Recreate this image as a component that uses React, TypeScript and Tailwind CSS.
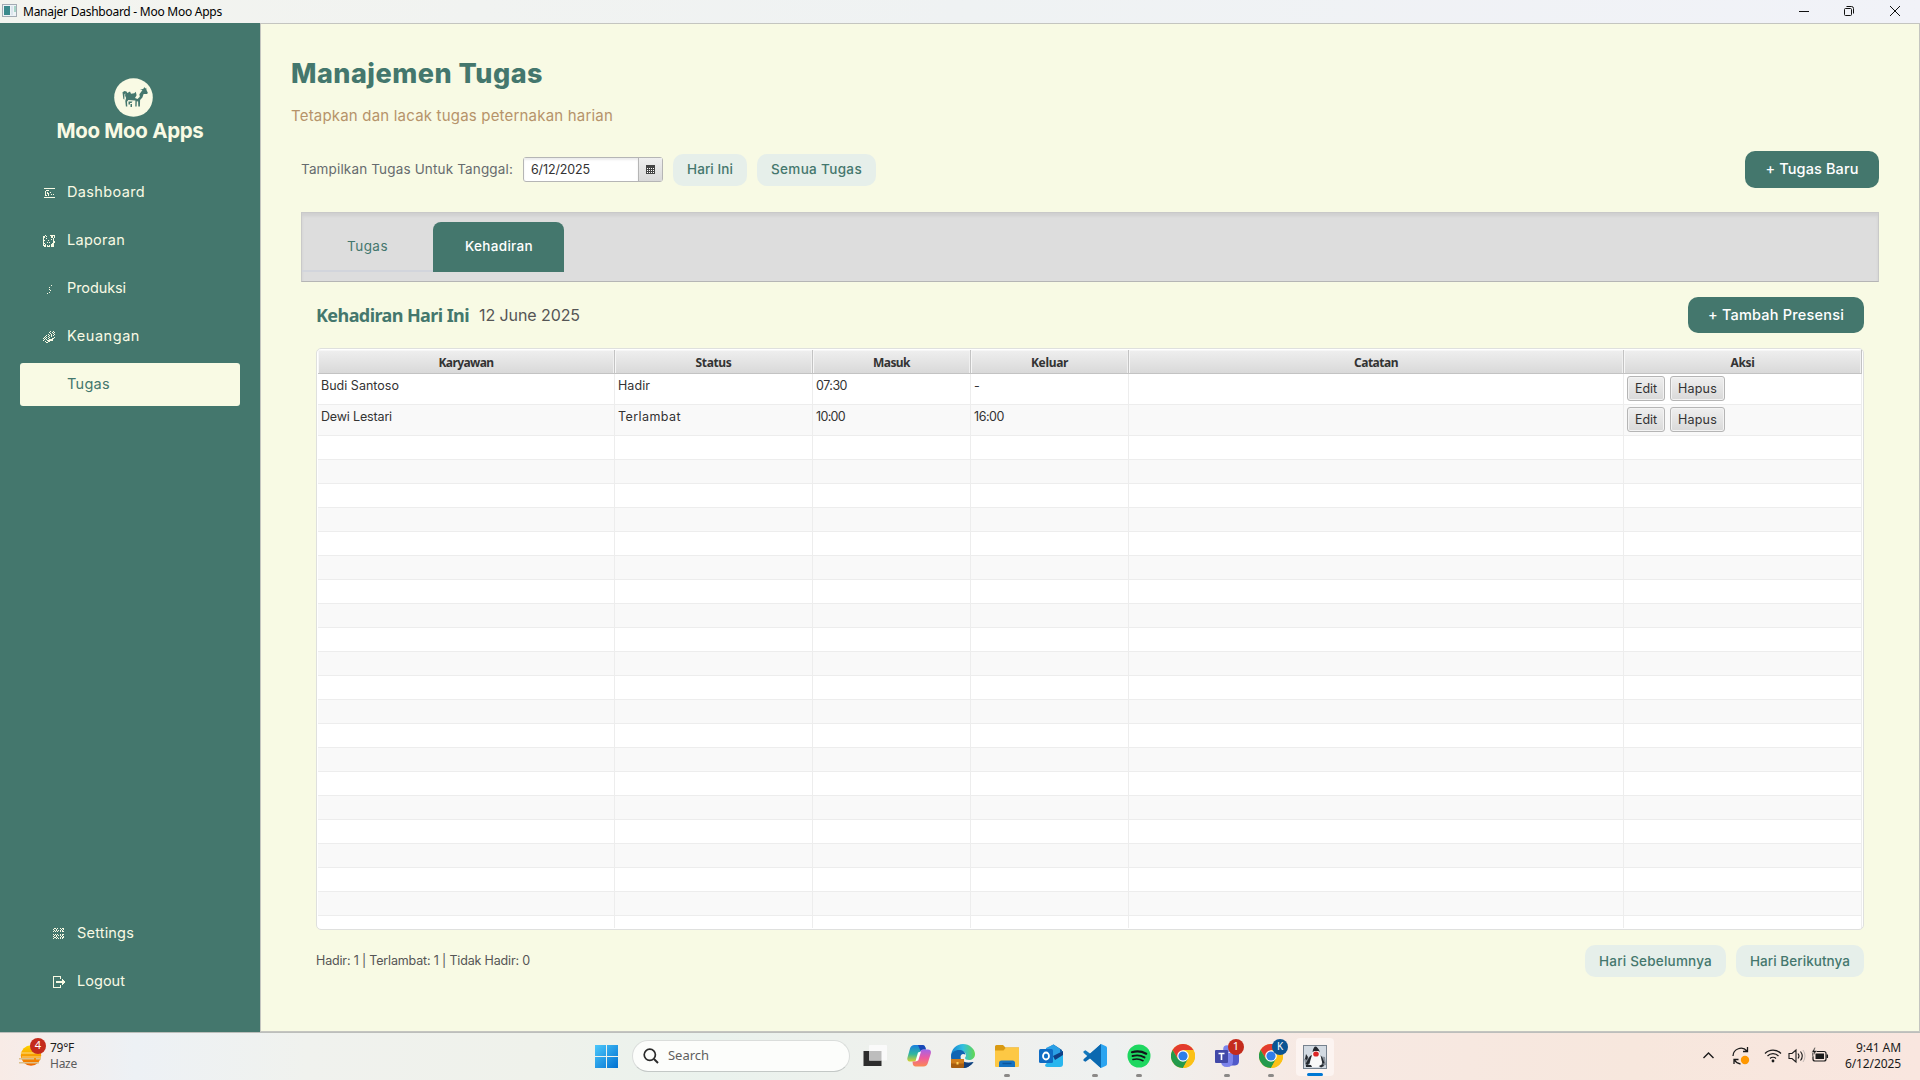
import { useLayoutEffect, useRef, useState } from "react";
import type { ReactNode } from "react";

/* One line of text whose tracking is adjusted so that it spans `w` pixels. */
function Fit({ w, children, className = "" }: { w: number; children: string; className?: string }) {
  const ref = useRef<HTMLSpanElement>(null);
  const [spacing, setSpacing] = useState(0);
  useLayoutEffect(() => {
    const el = ref.current;
    if (!el) return;
    el.style.letterSpacing = "0px";
    const natural = el.getBoundingClientRect().width;
    const next = (w - natural) / children.length;
    el.style.letterSpacing = `${next}px`;
    setSpacing(next);
  }, [w, children]);
  return (
    <span ref={ref} className={`inline-block shrink-0 whitespace-nowrap ${className}`} style={{ letterSpacing: spacing }}>
      {children}
    </span>
  );
}

function Pixels({ rows, className = "" }: { rows: string[]; className?: string }) {
  const width = Math.max(...rows.map((r) => r.length));
  return (
    <svg width={width} height={rows.length} className={className} shapeRendering="crispEdges" fill="#f9fae4">
      {rows.flatMap((r, y) =>
        r.split("").map((c, x) => (c === "#" ? <rect key={`${x}-${y}`} x={x} y={y} width="1" height="1" /> : null)),
      )}
    </svg>
  );
}

const dashboardIcon = [
  "###########",
  "...........",
  "..###......",
  ".#.........",
  ".#.#..#....",
  ".#.##......",
  ".#..#..#.#.",
  ".##.#......",
  "...........",
  "###########",
];
const laporanIcon = [
  "..#....#####",
  "##.#....##.#",
  "##......##.#",
  "#..#......#.",
  "#.......#.#.",
  "##...#....#.",
  "#.........##",
  "#...#.#...##",
  "##.......##.",
  "#.#.....###.",
  "###.#.#.###.",
  ".##.###.###.",
];
const produksiIcon = [
  "......",
  ".....#",
  "......",
  "...#..",
  "......",
  "...#..",
  "....#.",
  "......",
  "...#..",
  ".#....",
];
const keuanganIcon = [
  ".......#..#.",
  "......#..#.#",
  ".......#..#.",
  ".....#..#..#",
  "...#..#.#.#.",
  "..#..#..#...",
  ".#.#..#....#",
  "#.#..#...##.",
  ".#.#..####..",
  "#...######..",
  "..#..##.....",
  "...##.......",
];
const settingsIcon = [
  ".##.#..#.##",
  "#..#....#.#",
  ".#.#.#.#.#.",
  "#.#.#..#.##",
  "...........",
  "...........",
  "#.#.#..#.##",
  ".#.#.#.#.#.",
  "#..#....#.#",
  ".##.#..#.##",
  "#..#.#.#.#.",
];
const logoutIcon = [
  "########....",
  "#......#....",
  "#......#....",
  "#........#..",
  "#........##.",
  "#..#########",
  "#..#########",
  "#........##.",
  "#........#..",
  "#......#....",
  "#......#....",
  "########....",
];

const nav = [
  { label: "Dashboard", w: 78, icon: dashboardIcon },
  { label: "Laporan", w: 58, icon: laporanIcon },
  { label: "Produksi", w: 59, icon: produksiIcon },
  { label: "Keuangan", w: 73, icon: keuanganIcon },
];

function Cow() {
  return (
    <svg width="39" height="39" viewBox="0 0 39 39">
      <circle cx="19.5" cy="19.5" r="19.3" fill="#f9fae4" />
      <g fill="#44776d">
        <path d="M8.5 14.200 10.500 13l2 .4.800 1.600 2.700-1.500 1 2.200 3.300-.5 1.500-1.500.8 3.500-1.600 2.800 2.500 1 2.300-2.300-.4-2.500 2-2.700 1-1.400-2.400-.8 3.200-.4 1.200-2 .8 1.600 1-.8.300 2.300 1.400 3-1 1.100-3.300-.2-1.200 3.500-2.300 2.500-.2 6.700h-1.600l-.2-5-1.300-.3-.2 5.300h-1.300l.1-6-4.200-.4-2.900-.2-1.300 1.700.3 4.900h-1.400l-.6-5.600.8-3-1-2.200.2-2.600-.8 1-.2 5.500-1-1z" />
        <path d="M14.500 23.500h4l-1 1.500h-1.500v1.500h-1.500zM16.500 26h1.500v3h-1.500z" />
      </g>
    </svg>
  );
}

function Sidebar() {
  return (
    <aside className="flex w-[260px] shrink-0 flex-col bg-[#44776d] font-['Inter'] text-[#f9fae4]">
      <div className="mt-[55px] flex flex-col items-center">
        <div className="h-[39px] pl-[7px]">
          <Cow />
        </div>
        <Fit w={147} className="mt-px text-[20.5px] leading-[26px] font-bold">Moo Moo Apps</Fit>
      </div>
      <nav className="mt-[27px] flex flex-col gap-[5px] px-5">
        {nav.map((n) => (
          <div key={n.label} className="flex h-[43px] items-center pl-[23px] text-[14.5px]">
            <div className="flex w-6 items-center">
              <Pixels rows={n.icon} className={n.label === "Produksi" ? "ml-[3px]" : n.label === "Dashboard" ? "ml-px" : ""} />
            </div>
            <Fit w={n.w} className="-mt-[2px]">{n.label}</Fit>
          </div>
        ))}
        <div className="flex h-[43px] items-center rounded-[3px] bg-[#f9fae4] pl-[47px] text-[14.5px] text-[#44776d]">
          <Fit w={43} className="-mt-[2px]">Tugas</Fit>
        </div>
      </nav>
      <div className="mt-auto mb-[29px] flex flex-col gap-[5px] pl-[53px] text-[14.5px]">
        <div className="flex h-[43px] items-center">
          <div className="w-6"><Pixels rows={settingsIcon} /></div>
          <Fit w={57} className="-mt-[2px]">Settings</Fit>
        </div>
        <div className="flex h-[43px] items-center">
          <div className="w-6"><Pixels rows={logoutIcon} /></div>
          <Fit w={48} className="-mt-[2px]">Logout</Fit>
        </div>
      </div>
    </aside>
  );
}

function PrimaryButton({ w, label, className }: { w: number; label: string; className: string }) {
  return (
    <button className={`flex items-center justify-center rounded-[10px] bg-[#44776d] pb-px text-[14.5px] font-medium text-white ${className}`}>
      <Fit w={w}>{label}</Fit>
    </button>
  );
}

function SoftButton({ w, label, className }: { w: number; label: string; className: string }) {
  return (
    <button className={`flex h-8 items-center justify-center rounded-[10px] bg-[#e6efea] text-[13.5px] font-medium text-[#44776d] ${className}`}>
      <Fit w={w}>{label}</Fit>
    </button>
  );
}

function CellButton({ w, label, className }: { w: number; label: string; className: string }) {
  return (
    <button className={`flex h-[25px] items-center justify-center rounded-[3px] border border-[#b5b5b5] bg-linear-to-b from-[#efefef] to-[#d9d9d9] pt-[2px] text-[12.5px] text-[#333333] shadow-[inset_0_0_0_1px_#f3f3f3] ${className}`}>
      <Fit w={w}>{label}</Fit>
    </button>
  );
}

const headers: [string, number][] = [
  ["Karyawan", 55],
  ["Status", 36],
  ["Masuk", 37],
  ["Keluar", 37],
  ["Catatan", 44],
  ["Aksi", 24],
];
const people: [string, number][][] = [
  [["Budi Santoso", 78], ["Hadir", 32], ["07:30", 31], ["-", 6]],
  [["Dewi Lestari", 71], ["Terlambat", 63], ["10:00", 29], ["16:00", 30]],
];
const grid = "grid grid-cols-[297px_198px_158px_158px_495px_238px]";

function AttendanceTable() {
  return (
    <div className="mt-[15px] h-[582px] rounded-[5px] border border-[#dfe0de] bg-white p-px">
      <div className="h-[578px] w-[1544px] overflow-hidden">
        <div className={`${grid} h-6 border-b border-[#c3c3c3]`}>
          {headers.map(([h, w]) => (
            <div key={h} className="flex items-center justify-center border-r border-[#c3c3c3] bg-linear-to-b from-[#efefef] to-[#d9d9d9] pt-[3px] font-['Noto_Sans'] text-xs font-bold text-[#333333] shadow-[inset_1px_1px_0_#f6f6f6,inset_-1px_0_0_#f0f0f0]">
              <Fit w={w}>{h}</Fit>
            </div>
          ))}
        </div>
        {people.map((cells, i) => (
          <div key={i} className={`${grid} h-[31px] ${i ? "bg-[#f9f9f9]" : "bg-white"}`}>
            {[0, 1, 2, 3, 4].map((c) => (
              <div key={c} className="border-r border-b border-[#ededed] pt-[3px] pl-[3px] text-[12.5px] leading-[18px] text-[#333333]">
                {cells[c] && <Fit w={cells[c][1]}>{cells[c][0]}</Fit>}
              </div>
            ))}
            <div className="flex gap-[5px] border-r border-b border-[#ededed] pt-[2px] pl-[3px]">
              <CellButton w={22} label="Edit" className="w-[38px]" />
              <CellButton w={39} label="Hapus" className="w-[55px]" />
            </div>
          </div>
        ))}
        {Array.from({ length: 21 }, (_, i) => (
          <div key={i} className={`${grid} h-6 ${i % 2 ? "bg-[#f9f9f9]" : "bg-white"}`}>
            {headers.map(([h]) => (
              <div key={h} className="border-r border-b border-[#ededed]" />
            ))}
          </div>
        ))}
      </div>
    </div>
  );
}

function DateField() {
  return (
    <div className="ml-[10px] flex h-[25px] w-[140px] rounded-[3px] border border-[#b5b5b5] bg-white">
      <div className="flex w-[115px] items-center border-r border-[#b5b5b5] pt-[2px] pl-[7px] text-[12.5px] text-[#333333] shadow-[inset_0_2px_2px_#ececec]">
        <Fit w={59}>6/12/2025</Fit>
      </div>
      <div className="flex flex-1 items-center justify-center bg-linear-to-b from-[#efefef] to-[#d9d9d9]">
        <svg width="9" height="10" shapeRendering="crispEdges">
          <rect width="9" height="9" y="0" fill="#444" />
          {[3, 5, 7].map((y) => [1, 3, 5, 7].map((x) => <rect key={`${x}${y}`} x={x} y={y} width="1" height="1" fill="#fff" />))}
        </svg>
      </div>
    </div>
  );
}

function Content() {
  return (
    <main className="flex min-w-0 flex-1 flex-col border border-[#c4c5c0] bg-[#f8fae4] font-['Inter']">
      <div className="mt-[30px] flex h-10 items-center pl-[30px] text-[27px] font-extrabold text-[#44776d]">
        <Fit w={252}>Manajemen Tugas</Fit>
      </div>
      <div className="mt-[12px] flex h-5 items-center pl-[30px] text-[15px] text-[#b6936a]">
        <Fit w={322}>Tetapkan dan lacak tugas peternakan harian</Fit>
      </div>
      <div className="mt-[25px] flex h-[37px] items-center pr-10 pl-10">
        <Fit w={212} className="text-[13.5px] text-[#666b6e]">Tampilkan Tugas Untuk Tanggal:</Fit>
        <DateField />
        <SoftButton w={46} label="Hari Ini" className="ml-[10px] w-[74px]" />
        <SoftButton w={91} label="Semua Tugas" className="ml-[10px] w-[119px]" />
        <PrimaryButton w={93} label="+ Tugas Baru" className="ml-auto h-[37px] w-[134px]" />
      </div>
      <div className="mx-10 mt-6 flex h-[70px] border border-[#c9c9c9] border-b-[#b5b5b5] bg-[#dddddd] pt-[9px] text-[13.5px] font-medium shadow-[inset_0_3px_3px_#d0d0d0]">
        <div className="flex h-[50px] w-[131px] items-center border-b-2 border-[#d2d5dc] pl-[45px] font-normal text-[#44776d]">
          <Fit w={41}>Tugas</Fit>
        </div>
        <div className="flex h-[50px] w-[131px] items-center justify-center rounded-t-lg bg-[#44776d] pb-[2px] pl-px text-white">
          <Fit w={68}>Kehadiran</Fit>
        </div>
      </div>
      <div className="mx-[55px] flex flex-col">
        <div className="mt-[15px] flex h-9 items-center">
          <Fit w={153} className="font-['Noto_Sans'] text-lg font-bold text-[#44776d]">Kehadiran Hari Ini</Fit>
          <Fit w={101} className="ml-[10px] text-base text-[#555555]">12 June 2025</Fit>
          <PrimaryButton w={136} label="+ Tambah Presensi" className="ml-auto h-9 w-[176px]" />
        </div>
        <AttendanceTable />
        <div className="mt-[15px] flex h-8 items-center">
          <Fit w={214} className="text-[12.5px] text-[#555555]">Hadir: 1 | Terlambat: 1 | Tidak Hadir: 0</Fit>
          <SoftButton w={113} label="Hari Sebelumnya" className="ml-auto w-[141px]" />
          <SoftButton w={100} label="Hari Berikutnya" className="ml-[10px] w-[128px]" />
        </div>
      </div>
    </main>
  );
}

function TitleBar() {
  return (
    <header className="flex h-[23px] items-center bg-linear-to-r from-[#f3f4ef] via-[#eff2f3] to-[#f1f2f8] pl-[2px] font-['Noto_Sans'] text-xs text-black">
      <svg width="16" height="16" className="mr-[5px] -mt-px">
        <rect x="0.500" y="1.500" width="14" height="12" fill="#eef3f6" stroke="#a3abb3" />
        <rect x="2" y="3" width="6" height="9" fill="#3b8a8c" />
        <rect x="9" y="3" width="2" height="9" fill="#dce6ee" />
        <rect x="12" y="3" width="2" height="6" fill="#a9d5c8" />
      </svg>
      <Fit w={199}>Manajer Dashboard - Moo Moo Apps</Fit>
      <svg width="104" height="16" className="mr-[19px] -mt-[2px] ml-auto" fill="none" stroke="#111">
        <path d="M2 8.500h10" />
        <path d="M47.500 6.500q0-1 1-1h5q1 0 1 1v5q0 1-1 1h-5q-1 0-1-1z" />
        <path d="M49.500 3.500h5q2 0 2 2v5" />
        <path d="m93 3 10 10M103 3 93 13" />
      </svg>
    </header>
  );
}

function Chrome() {
  return (
    <svg width="24" height="24" viewBox="0 0 24 24">
      <circle cx="12" cy="12" r="12" fill="#fbc116" />
      <path d="M1.600 6A12 12 0 0 1 22.400 6H12L7 15z" fill="#e33b2e" />
      <path d="M1.600 6A12 12 0 0 0 12 24l5-9-10 0z" fill="#249a4c" />
      <path d="M12 6h10.400A12 12 0 0 1 12 24l5-9z" fill="#fbc116" />
      <circle cx="12" cy="12" r="5.800" fill="#fff" />
      <circle cx="12" cy="12" r="4.600" fill="#2f7de9" />
    </svg>
  );
}

function Task({ children, dot = false }: { children: ReactNode; dot?: boolean }) {
  return (
    <div className="relative flex h-[46px] w-11 items-center justify-center pb-px">
      {children}
      {dot && <span className="absolute bottom-[3px] left-[19px] h-[3px] w-[6px] rounded-full bg-[#8b8987]" />}
    </div>
  );
}

function TaskIcons() {
  return (
    <>
      <Task>
        <svg width="24" height="24">
          <rect x="0.500" y="7" width="18" height="15" fill="#2d2d2d" />
          <rect x="6" y="1" width="18" height="15.500" rx="1" fill="#fafafa" />
          <rect x="6" y="7" width="12.500" height="9.500" fill="#bdbdbd" />
        </svg>
      </Task>
      <Task>
        <svg width="24" height="24" viewBox="0 0 24 24">
          <defs>
            <linearGradient id="cpA" x1="0" y1="0" x2="0" y2="1">
              <stop stopColor="#1a7fe0" /><stop offset=".55" stopColor="#2fb6a0" /><stop offset="1" stopColor="#d7d22f" />
            </linearGradient>
            <linearGradient id="cpB" x1="0" y1="0" x2="0" y2="1">
              <stop stopColor="#a463e8" /><stop offset=".5" stopColor="#ee5aa0" /><stop offset="1" stopColor="#fa8a52" />
            </linearGradient>
          </defs>
          <path d="M7.500 1h8q2 0 2.700 2l.6 2.500h-2.500q-2 0-2.600 2L11.500 15q-.8 2.500-3 2.500H3.500q-4 0-3-4l2.500-9q1-3.500 4.500-3.500z" fill="url(#cpA)" />
          <path d="M11 1h4.500q2 0 2.700 2l.8 2.500h-3q-2 0-2.500 1.500z" fill="#1b49b8" />
          <path d="M16.500 22.500h-8q-2 0-2.600-2L5.500 17.500h3q2 0 2.500-2L13 8q.8-2.500 3-2.500h5q3.500 0 2.800 4L21 18.500q-1 4-4.500 4z" fill="url(#cpB)" />
          <path d="m11 8.500 3-1-2.800 9-2.700.8z" fill="#fff" />
        </svg>
      </Task>
      <Task>
        <svg width="24" height="24" viewBox="0 0 24 24">
          <defs>
            <linearGradient id="edge" x1="0" x2="1">
              <stop stopColor="#1684d2" /><stop offset=".5" stopColor="#33bfe0" /><stop offset="1" stopColor="#62d84d" />
            </linearGradient>
          </defs>
          <path d="M0 13C0 5 5.500 0 12 0s12 5 12 10c0 4-3 6-6 6-2.500 0-4-1-4-2 0-.6 1-1 1-3 0-2-2-4-5-4-5 0-10 3-10 8z" fill="url(#edge)" />
          <path d="M0 13c0-5 4-7 8-7 4 0 6 2 6.500 4.500C11 9 9.500 11 9.500 13c0 5 6 7 13 5-3 4-7 6-10.500 6C5 24 0 19 0 13z" fill="#0f65b4" />
          <path d="M9.500 12c0 5 5 8 13 6C19 23 15 24 12 24z" fill="#123f7a" />
          <rect y="15" width="13" height="9" rx="1" fill="#a65d10" />
          <rect y="15" width="13" height="4.500" rx="1" fill="#d07d1c" />
          <rect x="5.500" y="18" width="2" height="2.500" fill="#ffd45c" />
        </svg>
      </Task>
      <Task dot>
        <svg width="24" height="24" viewBox="0 0 24 24">
          <path d="M0 2.500Q0 1 1.500 1H8l2.500 2.500H24V9H0z" fill="#d99a12" />
          <path d="M0 6.500h8.500L11 3.500h12q1 0 1 1V22q0 1-1 1H1q-1 0-1-1z" fill="#fdc844" />
          <path d="M4 23v-4q0-2.500 2.500-2.500h11Q20 16.500 20 19v4z" fill="#1673c2" />
          <path d="M7.500 19.500h9" stroke="#0c559b" strokeWidth="1.500" />
        </svg>
      </Task>
      <Task>
        <svg width="24" height="24" viewBox="0 0 24 24">
          <path d="M5 6 14.500.5 23 6v12H5z" fill="#0f5ea8" />
          <path d="M7 4 14.500.5 21 5v8H7z" fill="#2a9fe5" />
          <path d="m13 13 11-6v13q0 3-3 3H8q-2 0-2-2z" fill="#29b6ee" />
          <path d="m14 12 10-5v4l-8 5z" fill="#103f85" />
          <rect y="5" width="14" height="14" rx="1.500" fill="#0f6cc4" />
          <ellipse cx="7" cy="12" rx="3" ry="3.500" fill="none" stroke="#fff" strokeWidth="1.800" />
        </svg>
      </Task>
      <Task dot>
        <svg width="24" height="24" viewBox="0 0 24 24">
          <path d="M18 0 7.300 9.800 2.500 6.200.5 7.200v1.600L16 22.500l2 1.500V16z" fill="#1479bd" />
          <path d="M18 24 7.300 14.200l-4.800 3.600-2-1v-1.600L18 .0v8z" fill="#0b69b0" />
          <path d="m18 0 5 2.300q1 .5 1 1.700v16q0 1.200-1 1.700L18 24z" fill="#2ba4f0" />
        </svg>
      </Task>
      <Task dot>
        <svg width="24" height="24" viewBox="0 0 24 24" fill="none" stroke="#11151a" strokeLinecap="round">
          <circle cx="12" cy="12" r="11.500" fill="#1ed760" stroke="none" />
          <path d="M5 8.200c5-1.400 10-.8 14.200 1.500" strokeWidth="2.200" />
          <path d="M5.500 12c4.400-1.200 8.500-.7 12 1.400" strokeWidth="1.900" />
          <path d="M6 15.500c3.700-.9 7-.5 10 1.200" strokeWidth="1.600" />
        </svg>
      </Task>
      <Task><Chrome /></Task>
      <Task dot>
        <svg width="24" height="24" viewBox="0 0 24 24">
          <circle cx="12" cy="5" r="3.800" fill="#7b83eb" />
          <circle cx="20" cy="7" r="2.800" fill="#5059c9" />
          <path d="M15 10h9v7q0 4-4 4.500h-4z" fill="#5059c9" />
          <path d="M6 9h12v8q0 6-6 6t-6-6z" fill="#7b83eb" />
          <rect y="6" width="13" height="13" rx="1" fill="#4249a8" />
          <path d="M3.500 9.500h6M6.500 9.500v6.500" stroke="#fff" strokeWidth="1.600" />
        </svg>
        <span className="absolute top-[5px] left-[23px] flex size-4 items-center justify-center rounded-full bg-[#c42b1c] text-[11px] text-white">1</span>
      </Task>
      <Task dot>
        <Chrome />
        <span className="absolute top-[5px] left-[23px] flex size-4 items-center justify-center rounded-full bg-[#0a5493] text-[10px] text-white">K</span>
      </Task>
      <div className="relative ml-[3px] flex h-[38px] w-[38px] items-center justify-center rounded bg-[#fcf4f1]">
        <svg width="24" height="24" viewBox="0 0 24 24">
          <rect x=".5" y=".5" width="23" height="23" fill="#d3dae2" stroke="#77828e" />
          <path d="M1 14 7 12l1 6-5 4zM16 11l6 1 1 8-4 1z" fill="#8b929b" />
          <path d="M7 19q0-6 2-10l2-6q2-3 4 2l3 7q2 5 0 8l-3 2h-6z" fill="#f8f8f8" />
          <path d="M9.500 7q1-5.500 3-5.500T17 7l-1.500-1h-4zM3 9l2 3-1 3-2-1zM7 11l2-1-2.500 8-2 2-2-1zM17.500 10l2 3 2 5-2 1z" fill="#24282e" />
          <path d="M3 20h5l1 2H3zM16 21l4-2 1 2-3 1.500z" fill="#24282e" />
          <ellipse cx="13" cy="9" rx="2.800" ry="2.600" fill="#dc2626" />
        </svg>
        <span className="absolute bottom-0 left-[11px] h-[3px] w-4 rounded-full bg-[#0078d4]" />
      </div>
    </>
  );
}

function Tray() {
  return (
    <div className="mb-px ml-auto flex items-center">
      <svg width="128" height="24" fill="none" stroke="#1b1b1b" className="mr-4">
        <path d="m2.500 14 5-5 5 5" strokeWidth="1.400" />
        <path d="M32 12a8 8 0 0 1 14-5M46.500 3v4.500H42M33 20v-4.500h4.500M33.500 16a8 8 0 0 0 6 4" strokeWidth="1.300" />
        <circle cx="44" cy="16" r="4.200" fill="#ff9800" stroke="none" />
        <path d="M64 9.500a11 11 0 0 1 16 0M66.500 12a7.500 7.500 0 0 1 11 0M69 14.500a4.200 4.200 0 0 1 6 0" strokeWidth="1.200" />
        <circle cx="72" cy="17" r="1.400" fill="#1b1b1b" stroke="none" />
        <path d="M88 9.500h3l4-3.500v12l-4-3.500h-3zM97 9.500q2 2.500 0 5M99.500 7.500q3.500 4.500 0 9" strokeWidth="1.100" />
        <path d="M102 6q4 6 0 12" stroke="#c3bab6" />
        <rect x="112" y="7.500" width="13" height="9.500" rx="2" strokeWidth="1.200" />
        <rect x="114.500" y="9.500" width="8.500" height="5.500" fill="#1b1b1b" stroke="none" />
        <path d="M126.300 10.500v3.500" strokeWidth="1.500" />
        <path d="m113.500 3.500-3 5h2.500l-1 4 4-6h-2.500l1-3z" fill="#1b1b1b" stroke="#f6e8df" strokeWidth=".6" />
      </svg>
      <div className="flex w-[56px] flex-col items-end text-xs leading-4 text-[#1b1b1b]">
        <Fit w={45}>9:41 AM</Fit>
        <Fit w={56}>6/12/2025</Fit>
      </div>
    </div>
  );
}

function Taskbar() {
  return (
    <footer className="flex h-12 items-center border-t border-[#bcbebb] bg-[linear-gradient(90deg,#f8ebe6_0%,#edf1f5_7%,#f0f2ee_16%,#eff2eb_28%,#eaf2ed_37%,#f0f0ed_50%,#eef1f0_58%,#f7e9e3_68%,#f7e7dd_85%,#f9e6df_100%)] pr-[19px] pl-[19px] font-['Noto_Sans']">
      <div className="relative mb-[2px] w-[31px]">
        <svg width="24" height="24" viewBox="0 0 24 24">
          <defs>
            <linearGradient id="sun" x1="0" y1="0" x2="0" y2="1">
              <stop stopColor="#ffd500" /><stop offset="1" stopColor="#ee6500" />
            </linearGradient>
          </defs>
          <circle cx="12" cy="11.500" r="10.200" fill="url(#sun)" />
          <path d="M1 9h20M3 13h19" stroke="#ffe9a6" strokeWidth=".8" />
          <path d="M0 14.700h15M17 14.700h5M0 18.700h20" stroke="#dcc08b" strokeWidth="1.600" />
        </svg>
        <span className="absolute -top-[6px] left-[11px] flex size-4 items-center justify-center rounded-full bg-[#c42b1c] text-[11px] text-white">4</span>
      </div>
      <div className="mb-px flex w-[545px] flex-col text-xs leading-4">
        <Fit w={24} className="self-start text-[#1b1b1b]">79°F</Fit>
        <Fit w={27} className="self-start text-[#5c5c5c]">Haze</Fit>
      </div>
      <svg width="23" height="23" viewBox="0 0 23 23">
        <defs>
          <linearGradient id="win" x1="0" y1="0" x2="1" y2="1" gradientUnits="objectBoundingBox">
            <stop stopColor="#4cc8fb" /><stop offset="1" stopColor="#0070d1" />
          </linearGradient>
        </defs>
        <path d="M0 0h11v11H0zM12 0h11v11H12zM0 12h11v11H0zM12 12h11v11H12z" fill="url(#win)" />
      </svg>
      <div className="mr-[3px] mb-px ml-[14px] flex h-8 w-[218px] items-center rounded-full border border-[#dadddb] border-b-[#c3c8c6] bg-[#fcfdfb] pl-[10px]">
        <svg width="16" height="16" fill="none" stroke="#2a2a2a" strokeWidth="1.700">
          <circle cx="6.800" cy="6.800" r="5.600" />
          <path d="m11 11 4 4" strokeWidth="2" />
        </svg>
        <Fit w={41} className="ml-[9px] text-[13px] text-[#5f5f5f]">Search</Fit>
      </div>
      <TaskIcons />
      <Tray />
    </footer>
  );
}

export default function App() {
  return (
    <div className="flex h-[1080px] w-[1920px] flex-col overflow-hidden">
      <TitleBar />
      <div className="flex h-[1009px]">
        <Sidebar />
        <Content />
      </div>
      <Taskbar />
    </div>
  );
}
